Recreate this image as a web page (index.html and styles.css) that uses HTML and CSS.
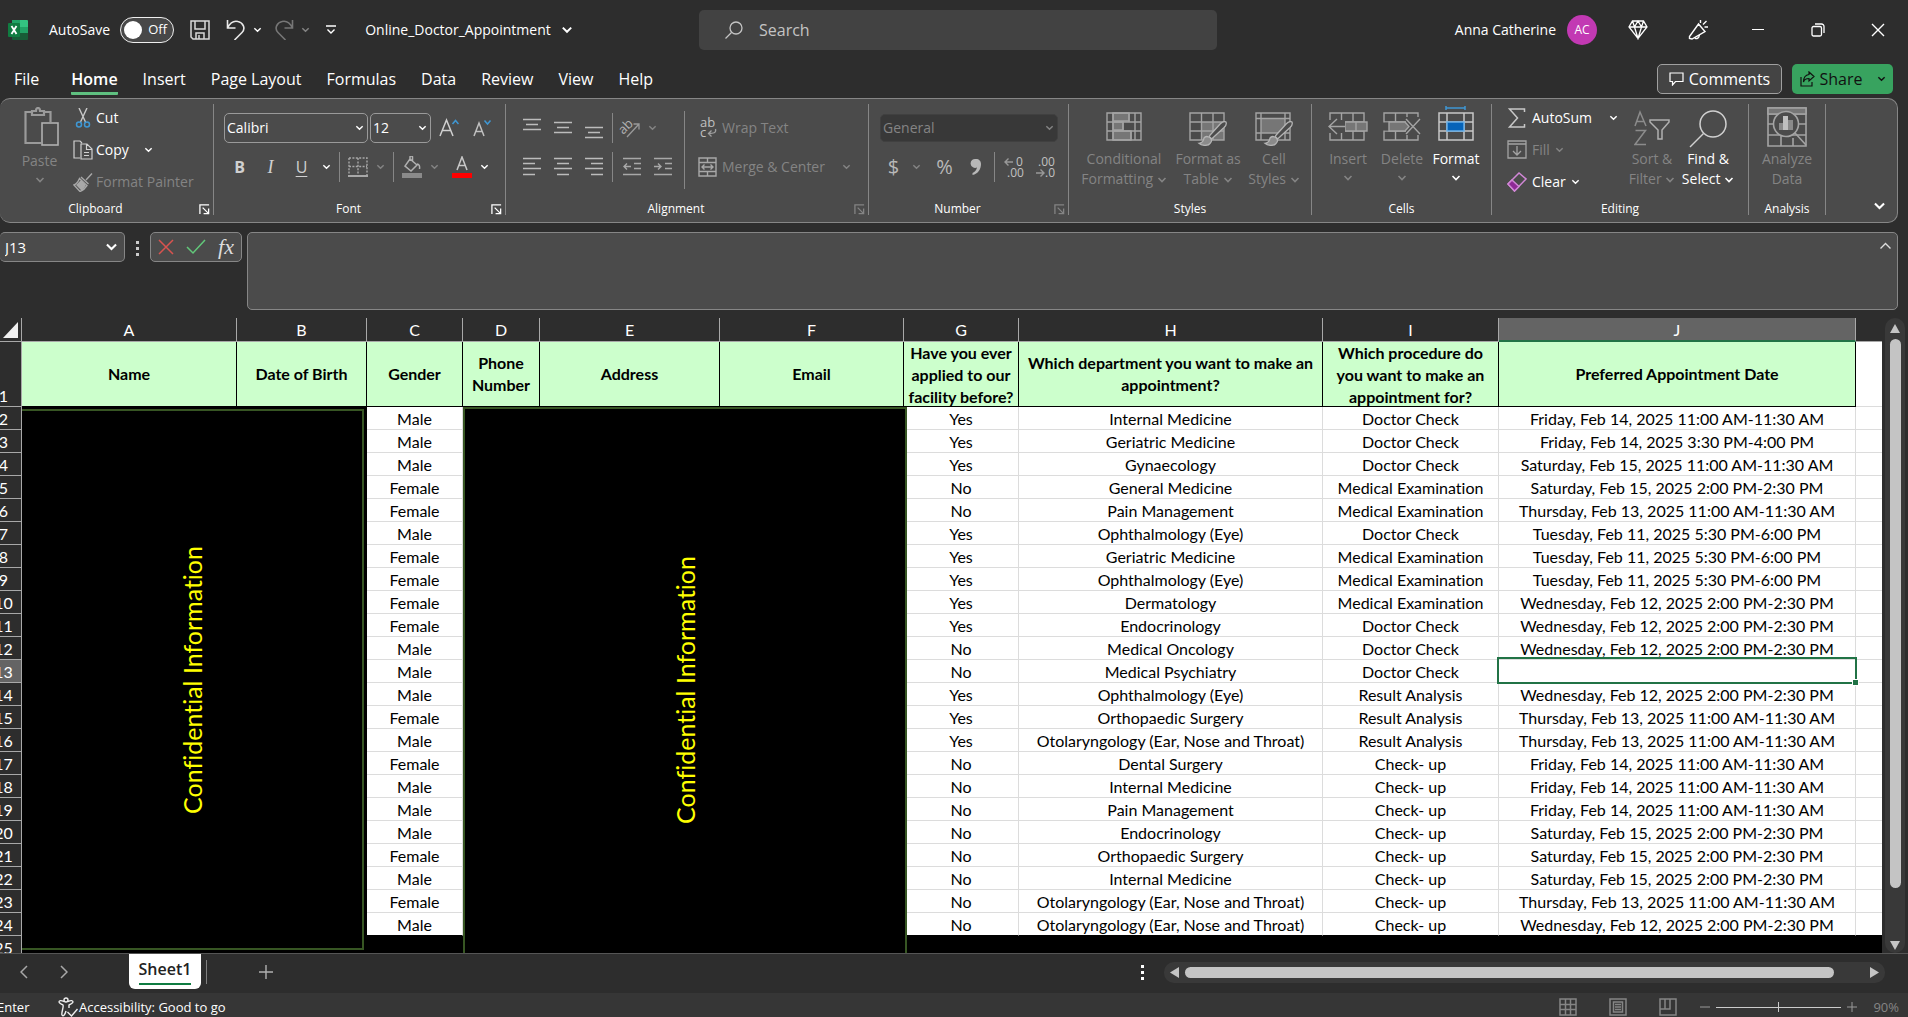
FILE: index.html
```html
<!DOCTYPE html>
<html lang="en">
<head>
<meta charset="utf-8">
<title>Online_Doctor_Appointment - Excel</title>
<link rel="stylesheet" href="styles.css">
</head>
<body>
<svg width="0" height="0" class="defs" aria-hidden="true">
  <defs>
    <symbol id="chev" viewBox="0 0 10 6"><path d="M1.5 1 5 4.5 8.5 1" fill="none" stroke="currentColor" stroke-width="1.6"/></symbol>
    <symbol id="launch" viewBox="0 0 12 12"><path d="M1 11V1h10M4 4l6 6M10.5 5v5.500H5" fill="none" stroke="currentColor" stroke-width="1.400"/></symbol>
    <symbol id="brush" viewBox="0 0 32 28"><path d="M31 1c-2-1-4 0-6 2L14 15c-1 1-1 2 0 3s2 1 3 0L29 7c2-2 3-4 2-6z" fill="#4b4b4b" stroke="#b4b4b4" stroke-width="1.400"/><path d="M12 17c-3-1-5 1-5 3-1 3-2 4-5 4 3 3 10 3 12 0 2-2 2-4 0-6z" fill="#8b8b8b" stroke="#b4b4b4" stroke-width="1.400"/></symbol>
  </defs>
</svg>

<header class="titlebar">
  <div class="title-left">
    <svg class="logo" width="20" height="20" viewBox="0 0 20 20"><path d="M4 0h8v7H4z" fill="#21a366"/><path d="M12 0h7a1 1 0 0 1 1 1v6h-8z" fill="#33c481"/><path d="M4 7h8v6H4z" fill="#107c41"/><path d="M12 7h8v6h-8z" fill="#21a366"/><path d="M4 13h16v6a1 1 0 0 1-1 1H5a1 1 0 0 1-1-1z" fill="#185c37"/><rect y="3" width="12" height="14" rx="1" fill="#107c41"/><path d="m3.500 6 5 8M8.500 6l-5 8" stroke="#fff" stroke-width="1.800"/></svg>
    <label class="autosave">AutoSave <span class="switch"><input type="checkbox" class="switch-box"><span class="switch-text">Off</span></span></label>
    <button class="plain save" aria-label="Save"><svg width="20" height="20" viewBox="0 0 20 20" fill="none" stroke="#d8d8d8" stroke-width="1.500"><path d="M1 1h18v18H3l-2-2zM5 1v8h10V1M6 19v-6h8v6M9 15v4"/></svg></button>
    <button class="plain undo" aria-label="Undo"><svg width="20" height="20" viewBox="0 0 20 20" fill="none" stroke="#e8e8e8" stroke-width="1.600"><path d="M1.500 0v8h8M1.500 8C4 3 8 .5 12 1.500c5 1 8 7 4 11L8.500 20"/></svg></button>
    <button class="plain chev-btn" aria-label="Undo list"><svg width="9" height="6"><use href="#chev"/></svg></button>
    <button class="plain redo" aria-label="Redo"><svg width="20" height="20" viewBox="0 0 20 20" fill="none" stroke="#767676" stroke-width="1.600"><path d="M18.500 0v8h-8M18.500 8C16 3 12 .5 8 1.500c-5 1-8 7-4 11L11.500 20"/></svg></button>
    <button class="plain chev-btn dim" aria-label="Redo list"><svg width="9" height="6"><use href="#chev"/></svg></button>
    <button class="plain qat" aria-label="Customize toolbar"><svg width="10" height="10" viewBox="0 0 10 10" fill="none" stroke="#fff" stroke-width="1.400"><path d="M0 1h10M1.500 4.500 5 8l3.500-3.500"/></svg></button>
    <button class="plain doc">Online_Doctor_Appointment <svg width="12" height="8"><use href="#chev"/></svg></button>
  </div>
  <label class="search"><svg width="18" height="18" viewBox="0 0 18 18" fill="none" stroke="#c4c4c4" stroke-width="1.300"><circle cx="11" cy="7" r="6"/><path d="M6.500 11.500.5 17.500"/></svg><input type="text" placeholder="Search" aria-label="Search"></label>
  <div class="title-right">
    <span class="user">Anna Catherine</span>
    <button class="avatar">AC</button>
    <button class="plain wbtn" aria-label="Premium"><svg width="20" height="20" viewBox="0 0 20 20" fill="none" stroke="#fff" stroke-width="1.300"><path d="M4.500 1h11L19 7l-9 11.500L1 7zM1 7h18M4.500 1 6.500 7 10 18.500 13.500 7l2-6M6.500 7 10 1l3.500 6"/></svg></button>
    <button class="plain wbtn" aria-label="Coming soon"><svg width="20" height="20" viewBox="0 0 20 20" fill="none" stroke="#fff" stroke-width="1.400"><path d="M10.500 4 1.500 16.500v2L4 19l13-7.500zM7 17.500c0 2 4 1.500 4.500-2.500M12.500 3V0M15 4.500 18.500 1M16.500 7H20"/></svg></button>
    <button class="plain wbtn" aria-label="Minimize"><svg width="12" height="12"><path d="M0 5.500h12" stroke="#fff"/></svg></button>
    <button class="plain wbtn" aria-label="Restore"><svg width="14" height="14" viewBox="0 0 14 14" fill="none" stroke="#fff" stroke-width="1.300"><rect x="1" y="3.500" width="9.500" height="9.500" rx="1.500"/><path d="M4 1h6.500A2.500 2.500 0 0 1 13 3.500V10"/></svg></button>
    <button class="plain wbtn" aria-label="Close"><svg width="14" height="14"><path d="m1 1 12 12M13 1 1 13" stroke="#fff" stroke-width="1.400"/></svg></button>
  </div>
</header>

<nav class="tabs">
  <a href="#">File</a><a href="#" class="active">Home</a><a href="#">Insert</a><a href="#">Page Layout</a><a href="#">Formulas</a><a href="#">Data</a><a href="#">Review</a><a href="#">View</a><a href="#">Help</a>
  <div class="tab-actions">
    <button class="comments"><svg width="15" height="14" viewBox="0 0 15 14" fill="none" stroke="#fff" stroke-width="1.200"><path d="M1 1h13v8.500H6.500L3.500 13V9.500H1z"/></svg>Comments</button>
    <button class="share"><svg width="15" height="16" viewBox="0 0 15 16" fill="none" stroke="#111" stroke-width="1.200"><path d="M1 6v9h11v-4M9 1l5 4.500L9 10V7.500C6 7.500 4 9 3.500 11 3.500 7 5.500 4 9 3.500z"/></svg>Share<svg class="share-chev" width="9" height="6"><use href="#chev"/></svg></button>
  </div>
</nav>

<section class="ribbon">
  <div class="group clipboard">
    <div class="body">
      <button class="plain big dim paste"><svg width="35" height="40" viewBox="0 0 35 40" fill="none" stroke="#9a9a9a" stroke-width="2.200"><path d="M7 5H1.500v31H17M21 5h5.500v10M8 8V4h4c0-4 4-4 4 0h4v4z"/><rect x="18" y="16" width="16" height="22" fill="#4b4b4b" stroke="#b0b0b0" stroke-width="1.600"/></svg><span>Paste</span><svg class="c" width="10" height="6"><use href="#chev"/></svg></button>
      <div class="stack">
        <button class="plain line"><svg width="20" height="20" viewBox="0 0 20 20" fill="none"><path d="m6 0 6.500 14M14 0 7.500 14" stroke="#c8c8c8" stroke-width="1.400"/><circle cx="6" cy="16.500" r="2.500" stroke="#3f97d3" stroke-width="1.500"/><circle cx="14" cy="16.500" r="2.500" stroke="#3f97d3" stroke-width="1.500"/></svg>Cut</button>
        <button class="plain line"><svg width="20" height="20" viewBox="0 0 20 20" fill="none" stroke="#d0d0d0" stroke-width="1.200"><path d="M7 18H1V1h6l2 2M8 4h6l5 5v10H8zM13.500 4v5.500H19M11 12.500h5M11 15.500h5"/></svg>Copy<svg class="gap-wide" width="9" height="6"><use href="#chev"/></svg></button>
        <button class="plain line dim"><svg width="20" height="20" viewBox="0 0 20 20" fill="none" stroke="#a8a8a8" stroke-width="1.400"><path d="M19 1.500 13 8M8 5l7.500 7M6.500 6.500l7.500 7c-2 3-4 5-7 6L1 13c3-1 4-3 5.500-6.500zM9.500 9l-4 4 3.500 3"/><path d="m4 13 5 5 3-5-4-4z" fill="#a8a8a8"/></svg>Format Painter</button>
      </div>
    </div>
    <div class="caption"><span>Clipboard</span><button class="plain" aria-label="Clipboard settings"><svg width="11" height="11"><use href="#launch"/></svg></button></div>
  </div>

  <div class="group font">
    <div class="body rows">
      <div class="row">
        <span class="combo w144"><select aria-label="Font"><option>Calibri</option></select><svg width="9" height="6"><use href="#chev"/></svg></span>
        <span class="combo w61"><select aria-label="Font size"><option>12</option></select><svg width="9" height="6"><use href="#chev"/></svg></span>
        <button class="plain t31" aria-label="Increase font size"><svg width="20" height="20" viewBox="0 0 20 20" fill="none"><path d="M1 18 7.500 2 14 18M3.500 12.500h8" stroke="#d0d0d0" stroke-width="1.500"/><path d="m13.500 6 3-3.500 3 3.500" stroke="#3f97d3" stroke-width="1.500"/></svg></button>
        <button class="plain t31" aria-label="Decrease font size"><svg width="20" height="20" viewBox="0 0 20 20" fill="none"><path d="m2 18 5-13 5 13M4 13.500h6" stroke="#c0c0c0" stroke-width="1.500"/><path d="m12.500 2.500 3 3.500 3-3.500" stroke="#3f97d3" stroke-width="1.500"/></svg></button>
      </div>
      <div class="row tight">
        <button class="plain t31 b">B</button><button class="plain t31 i">I</button><button class="plain t31 u">U</button><button class="plain t18" aria-label="Underline styles"><svg width="9" height="6"><use href="#chev"/></svg></button><i class="sep"></i>
        <button class="plain t27" aria-label="Borders"><svg width="20" height="20" viewBox="0 0 20 20" fill="none" stroke="#a8a8a8" stroke-width="1.400"><path d="M1 1h18v17M1 1v17M10 1v17M1 9.500h18" stroke-dasharray="2 1.400"/><path d="M0 19h20" stroke-width="2"/></svg></button><button class="plain t18 dim" aria-label="Border styles"><svg width="9" height="6"><use href="#chev"/></svg></button><i class="sep"></i>
        <button class="plain t27" aria-label="Fill color"><svg width="20" height="22" viewBox="0 0 20 22"><path d="m8 3 7 6-6 6-6-5 5-7V1c0-1.500 2.500-1.500 2.500 0v5M15 8c2 0 3 2 2.500 5" fill="none" stroke="#b0b0b0" stroke-width="1.500"/><path d="M0 17h20v5H0z" fill="#8a8a8a"/></svg></button><button class="plain t18 dim" aria-label="Fill colors"><svg width="9" height="6"><use href="#chev"/></svg></button>
        <button class="plain t27 fc" aria-label="Font color"><svg width="20" height="22" viewBox="0 0 20 22"><path d="m5 14 5-13 5 13M7 9.500h6" fill="none" stroke="#c8c8c8" stroke-width="1.500"/><path d="M0 17h20v5H0z" fill="#f00"/></svg></button><button class="plain t18" aria-label="Font colors"><svg width="9" height="6"><use href="#chev"/></svg></button>
      </div>
    </div>
    <div class="caption"><span>Font</span><button class="plain" aria-label="Font settings"><svg width="11" height="11"><use href="#launch"/></svg></button></div>
  </div>

  <div class="group align">
    <div class="body">
      <div class="rows">
        <div class="row tight">
          <button class="plain t31" aria-label="Top align"><svg width="18" height="22" viewBox="0 0 18 22" stroke="#bcbcbc" stroke-width="1.500"><path d="M0 2.500h18M3 7.500h12M0 12.500h18"/></svg></button>
          <button class="plain t31" aria-label="Middle align"><svg width="18" height="22" viewBox="0 0 18 22" stroke="#bcbcbc" stroke-width="1.500"><path d="M0 5.500h18M3 10.500h12M0 15.500h18"/></svg></button>
          <button class="plain t31" aria-label="Bottom align"><svg width="18" height="22" viewBox="0 0 18 22" stroke="#bcbcbc" stroke-width="1.500"><path d="M0 10.500h18M3 15.500h12M0 20.500h18"/></svg></button><i class="sep s7"></i>
          <button class="plain t27" aria-label="Orientation"><svg class="open" width="22" height="22" viewBox="0 0 22 22"><text x="0" y="14" transform="rotate(-45 7 11)" font-size="13" fill="#b0b0b0">ab</text><path d="M8 20 20 7M14.500 7H20v5.500" fill="none" stroke="#999" stroke-width="1.300"/></svg></button><button class="plain t18 dim" aria-label="Orientations"><svg width="9" height="6"><use href="#chev"/></svg></button>
        </div>
        <div class="row tight">
          <button class="plain t31" aria-label="Align left"><svg width="18" height="20" stroke="#bcbcbc" stroke-width="1.500"><path d="M0 1.500h18M0 6.500h12M0 11.500h18M0 17.500h12"/></svg></button>
          <button class="plain t31" aria-label="Center"><svg width="18" height="20" stroke="#bcbcbc" stroke-width="1.500"><path d="M0 1.500h18M3 6.500h12M0 11.500h18M3 17.500h12"/></svg></button>
          <button class="plain t31" aria-label="Align right"><svg width="18" height="20" stroke="#bcbcbc" stroke-width="1.500"><path d="M0 1.500h18M6 6.500h12M0 11.500h18M6 17.500h12"/></svg></button><i class="sep s7"></i>
          <button class="plain t31" aria-label="Decrease indent"><svg width="18" height="20" stroke="#a8a8a8" stroke-width="1.400" fill="none"><path d="M0 1.500h18M11 6.500h7M11 11.500h7M0 17.500h18M8 9.500H1M4 6.500l-3 3 3 3"/></svg></button>
          <button class="plain t31" aria-label="Increase indent"><svg width="18" height="20" stroke="#a8a8a8" stroke-width="1.400" fill="none"><path d="M0 1.500h18M11 6.500h7M11 11.500h7M0 17.500h18M0 9.500h7M4 6.500l3 3-3 3"/></svg></button>
        </div>
      </div>
      <i class="sep tall"></i>
      <div class="rows">
        <div class="row tight"><button class="plain line dim"><span class="t27"><svg class="open" width="18" height="22" viewBox="0 0 18 22"><text x="1" y="10" font-size="13" fill="#c0c0c0">ab</text><text x="1" y="20" font-size="13" fill="#c0c0c0">c</text><path d="M16.500 12c1 4-2 4.500-7 4.500M12.500 13.500l-3 3 3 3" fill="none" stroke="#a0a0a0" stroke-width="1.300"/></svg></span>Wrap Text</button></div>
        <div class="row tight"><button class="plain line dim"><span class="t27"><svg width="19" height="20" viewBox="0 0 19 20" fill="none" stroke="#a8a8a8" stroke-width="1.400"><path d="M1 1h17v18H1zM1 5.500h17M1 14.500h17M9.500 1v4M9.500 15v4M4 10h11M6.500 7.500 4 10l2.500 2.500M12.500 7.500 15 10l-2.500 2.500"/></svg></span>Merge &amp; Center<svg class="gap-merge" width="9" height="6"><use href="#chev"/></svg></button></div>
      </div>
    </div>
    <div class="caption"><span>Alignment</span><button class="plain dim" aria-label="Alignment settings"><svg width="11" height="11"><use href="#launch"/></svg></button></div>
  </div>

  <div class="group number">
    <div class="body rows">
      <div class="row"><span class="combo dark"><select aria-label="Number format" disabled><option>General</option></select><svg width="9" height="6"><use href="#chev"/></svg></span></div>
      <div class="row tight">
        <button class="plain t27 sym">$</button><button class="plain t18 dim" aria-label="Currencies"><svg width="9" height="6"><use href="#chev"/></svg></button><button class="plain t31 sym pct">%</button><button class="plain t31" aria-label="Comma style"><svg width="12" height="18" viewBox="0 0 12 18"><path d="M6 1a4.500 4.500 0 1 0 1 8.500C6.500 12 5 14 2.500 15v2C8 16 11 11 11 6c0-3-2-5-5-5z" fill="#b8b8b8"/></svg></button><i class="sep s7"></i>
        <button class="plain t31" aria-label="Increase decimal"><svg class="open" width="20" height="22" viewBox="0 0 20 22"><path d="M9 6H1M4.500 2.500 1 6l3.500 3.500" fill="none" stroke="#999" stroke-width="1.400"/><text x="12" y="10" font-size="12" fill="#c0c0c0">0</text><text x="3" y="21" font-size="12" fill="#c0c0c0">.00</text></svg></button>
        <button class="plain t31" aria-label="Decrease decimal"><svg class="open" width="20" height="22" viewBox="0 0 20 22"><path d="M1 17h8M5.500 13.500 9 17l-3.500 3.500" fill="none" stroke="#999" stroke-width="1.400"/><text x="3" y="10" font-size="12" fill="#c0c0c0">.00</text><text x="10" y="21" font-size="12" fill="#c0c0c0">.0</text></svg></button>
      </div>
    </div>
    <div class="caption"><span>Number</span><button class="plain dim" aria-label="Number settings"><svg width="11" height="11"><use href="#launch"/></svg></button></div>
  </div>

  <div class="group styles">
    <div class="body">
      <button class="plain big dim two w94"><svg width="36" height="34" viewBox="0 0 36 34" fill="none" stroke="#a4a4a4" stroke-width="1.400"><path d="M7 1h16v8H7zM7 10h10v8H7zM7 19h18v9H7z" fill="#767676"/><path d="M1 1h34v27H1zM1 10h34M1 19h34M7 1v27M29 1v27M23 1v9M17 10v9M25 19v9"/></svg><span>Conditional<br>Formatting <svg width="10" height="6"><use href="#chev"/></svg></span></button>
      <button class="plain big dim two w74"><svg width="38" height="34" viewBox="0 0 38 34" fill="none" stroke="#a4a4a4" stroke-width="1.400"><path d="M13 10h22v18H13z" fill="#767676" stroke="none"/><path d="M1 1h34v27H1zM1 10h34M1 19h34M12.500 1v27M24 1v27"/><use href="#brush" x="8" y="9" width="30" height="26"/></svg><span>Format as<br>Table <svg width="10" height="6"><use href="#chev"/></svg></span></button>
      <button class="plain big dim two w58"><svg width="38" height="34" viewBox="0 0 38 34" fill="none" stroke="#a4a4a4" stroke-width="1.400"><path d="M6 7h24v14H6z" fill="#767676" stroke="none"/><path d="M1 1h34v27H1zM1 6.500h34M1 21h34M6 1v27M30 1v27"/><use href="#brush" x="8" y="9" width="30" height="26"/></svg><span>Cell<br>Styles <svg width="10" height="6"><use href="#chev"/></svg></span></button>
    </div>
    <div class="caption"><span>Styles</span></div>
  </div>

  <div class="group cells">
    <div class="body">
      <button class="plain big dim two w54"><svg width="40" height="34" viewBox="0 0 40 34" fill="none" stroke="#a4a4a4" stroke-width="1.400"><path d="M2 1h34v27H2zM2 10h34M2 19h34M13.500 1v27M25 1v27"/><path d="M17 10h22v9H17z" fill="#767676"/><path d="M0 8h17v13H0z" fill="#4b4b4b" stroke="none"/><path d="M17 14.500H1M9 7l-8 7.500L9 22"/><path d="M28 10v9"/></svg><span>Insert</span><svg class="c" width="10" height="6"><use href="#chev"/></svg></button>
      <button class="plain big dim two w54"><svg width="38" height="34" viewBox="0 0 38 34" fill="none" stroke="#a4a4a4" stroke-width="1.400"><path d="M1 1h34v27H1zM1 10h34M1 19h34M12.500 1v27M24 1v27"/><path d="M0 10.500h6v8H0zM23 5h15v18H23z" fill="#4b4b4b" stroke="none"/><path d="M6 10h16l4 4.500-4 4.500H6z" fill="#767676"/><path d="m23 7 14 15M37 7 23 22"/></svg><span>Delete</span><svg class="c" width="10" height="6"><use href="#chev"/></svg></button>
      <button class="plain big two w54"><svg class="open" width="36" height="34" viewBox="0 0 36 34" fill="none" stroke="#c8c8c8" stroke-width="1.500"><path d="M1 1h34v27H1zM1 10h34M1 19h34M9 1v27M26 1v27"/><path d="M9 10h17v9H9z" fill="#0563b8" stroke="#69afe5"/><path d="M8-4h19M8-6v4M27-6v4" stroke="#3f97d3"/></svg><span>Format</span><svg class="c" width="10" height="6"><use href="#chev"/></svg></button>
    </div>
    <div class="caption"><span>Cells</span></div>
  </div>

  <div class="group editing">
    <div class="body">
      <div class="stack">
        <button class="plain line"><svg width="20" height="20" viewBox="0 0 20 20" fill="none" stroke="#c8c8c8" stroke-width="1.500"><path d="M17.500 4V1h-15l8 9-8 9h15v-3"/></svg>AutoSum<svg class="gap-wide" width="9" height="6"><use href="#chev"/></svg></button>
        <button class="plain line dim"><svg width="20" height="20" viewBox="0 0 20 20" fill="none" stroke="#a4a4a4" stroke-width="1.300"><path d="M1 1h18v17H1zM1 4h18M10 6v9M6 11l4 4 4-4"/></svg>Fill<svg width="9" height="6"><use href="#chev"/></svg></button>
        <button class="plain line"><svg width="20" height="20" viewBox="0 0 20 20" fill="none" stroke="#d187d6" stroke-width="1.500"><path d="m1 12 11-11 7 6L7.500 19z"/><path d="m1 12 4-4 7 6.500L7.500 19z" fill="#8f2a96"/></svg>Clear<svg width="9" height="6"><use href="#chev"/></svg></button>
      </div>
      <button class="plain big dim two w54"><svg width="36" height="36" viewBox="0 0 36 36" fill="none" stroke="#8c8c8c" stroke-width="1.500"><path d="m1 15 5-14 6 14M3 10.500h7M1.500 19.500h10L1 33.500h11"/><path d="M16 9h19v2l-7 8v9h-4v-9l-8-8z" stroke="#b0b0b0"/></svg><span>Sort &amp;<br>Filter <svg width="10" height="6"><use href="#chev"/></svg></span></button>
      <button class="plain big two w58"><svg width="38" height="38" viewBox="0 0 38 38" fill="none" stroke="#d0d0d0" stroke-width="1.500"><circle cx="24" cy="14" r="13"/><path d="M14.500 23.500 1 37"/></svg><span>Find &amp;<br>Select <svg width="10" height="6"><use href="#chev"/></svg></span></button>
    </div>
    <div class="caption"><span>Editing</span></div>
  </div>

  <div class="group analysis">
    <div class="body">
      <button class="plain big dim two analyze"><svg width="40" height="40" viewBox="0 0 40 40" fill="none" stroke="#a4a4a4" stroke-width="1.600"><path d="M1 1h38v38H1zM1 7h38M1 17h6M1 28h38M14 28v11M26 31v8M32 17h7"/><path d="M1 1h38v6H1z" fill="#767676"/><circle cx="19" cy="17" r="12.500" fill="#4b4b4b"/><path d="m28 26 11 12"/><path d="M12 16h4v7h-4zM21 13h5v10h-5z" fill="#8a8a8a" stroke="none"/><path d="M16 9h5v14h-5z" fill="#c0c0c0" stroke="none"/></svg><span>Analyze<br>Data</span></button>
    </div>
    <div class="caption"><span>Analysis</span></div>
  </div>
  <button class="plain collapse" aria-label="Ribbon options"><svg width="13" height="8"><use href="#chev"/></svg></button>
</section>

<section class="formula-row">
  <span class="namebox"><input type="text" value="J13" aria-label="Name box"><svg width="13" height="8"><use href="#chev"/></svg></span>
  <span class="dots"><i></i><i></i><i></i></span>
  <span class="fx">
    <button class="plain" aria-label="Cancel"><svg width="16" height="16"><path d="m1 1 14 14M15 1 1 15" stroke="#d9534f" stroke-width="1.500"/></svg></button>
    <button class="plain" aria-label="Enter"><svg width="20" height="16"><path d="m1 8 6 6L19 1" fill="none" stroke="#62c87a" stroke-width="1.500"/></svg></button>
    <button class="plain fxb">fx</button>
  </span>
  <label class="formula"><textarea aria-label="Formula bar"></textarea><svg width="13" height="8" viewBox="0 0 13 8"><path d="m1.500 6.500 5-5 5 5" fill="none" stroke="#ddd" stroke-width="1.400"/></svg></label>
</section>

<main class="sheet">
  <div class="grid">
    <table>
      <colgroup><col class="rh"><col class="ca"><col class="cb"><col class="cc"><col class="cd"><col class="ce"><col class="cf"><col class="cg"><col class="ch"><col class="ci"><col class="cj"><col></colgroup>
      <thead>
        <tr class="letters"><th class="corner"><svg width="17" height="18"><path d="M16 1v16H1z" fill="#f0f0f0"/></svg></th><th>A</th><th>B</th><th>C</th><th>D</th><th>E</th><th>F</th><th>G</th><th>H</th><th>I</th><th class="sel">J</th><th class="k"></th></tr>
      </thead>
      <tbody>
        <tr class="heads"><th>1</th><td><div>Name</div></td><td><div>Date of Birth</div></td><td><div>Gender</div></td><td><div>Phone<br>Number</div></td><td><div>Address</div></td><td><div>Email</div></td><td><div>Have you ever<br>applied to our<br>facility before?</div></td><td><div>Which department you want to make an<br>appointment?</div></td><td><div>Which procedure do<br>you want to make an<br>appointment for?</div></td><td><div>Preferred Appointment Date</div></td><td class="k"></td></tr>
        <tr><th>2</th><td class="x" colspan="2"></td><td>Male</td><td class="x" colspan="3"></td><td>Yes</td><td>Internal Medicine</td><td>Doctor Check</td><td>Friday, Feb 14, 2025 11:00 AM-11:30 AM</td><td></td></tr>
        <tr><th>3</th><td class="x" colspan="2"></td><td>Male</td><td class="x" colspan="3"></td><td>Yes</td><td>Geriatric Medicine</td><td>Doctor Check</td><td>Friday, Feb 14, 2025 3:30 PM-4:00 PM</td><td></td></tr>
        <tr><th>4</th><td class="x" colspan="2"></td><td>Male</td><td class="x" colspan="3"></td><td>Yes</td><td>Gynaecology</td><td>Doctor Check</td><td>Saturday, Feb 15, 2025 11:00 AM-11:30 AM</td><td></td></tr>
        <tr><th>5</th><td class="x" colspan="2"></td><td>Female</td><td class="x" colspan="3"></td><td>No</td><td>General Medicine</td><td>Medical Examination</td><td>Saturday, Feb 15, 2025 2:00 PM-2:30 PM</td><td></td></tr>
        <tr><th>6</th><td class="x" colspan="2"></td><td>Female</td><td class="x" colspan="3"></td><td>No</td><td>Pain Management</td><td>Medical Examination</td><td>Thursday, Feb 13, 2025 11:00 AM-11:30 AM</td><td></td></tr>
        <tr><th>7</th><td class="x" colspan="2"></td><td>Male</td><td class="x" colspan="3"></td><td>Yes</td><td>Ophthalmology (Eye)</td><td>Doctor Check</td><td>Tuesday, Feb 11, 2025 5:30 PM-6:00 PM</td><td></td></tr>
        <tr><th>8</th><td class="x" colspan="2"></td><td>Female</td><td class="x" colspan="3"></td><td>Yes</td><td>Geriatric Medicine</td><td>Medical Examination</td><td>Tuesday, Feb 11, 2025 5:30 PM-6:00 PM</td><td></td></tr>
        <tr><th>9</th><td class="x" colspan="2"></td><td>Female</td><td class="x" colspan="3"></td><td>Yes</td><td>Ophthalmology (Eye)</td><td>Medical Examination</td><td>Tuesday, Feb 11, 2025 5:30 PM-6:00 PM</td><td></td></tr>
        <tr><th>10</th><td class="x" colspan="2"></td><td>Female</td><td class="x" colspan="3"></td><td>Yes</td><td>Dermatology</td><td>Medical Examination</td><td>Wednesday, Feb 12, 2025 2:00 PM-2:30 PM</td><td></td></tr>
        <tr><th>11</th><td class="x" colspan="2"></td><td>Female</td><td class="x" colspan="3"></td><td>Yes</td><td>Endocrinology</td><td>Doctor Check</td><td>Wednesday, Feb 12, 2025 2:00 PM-2:30 PM</td><td></td></tr>
        <tr><th>12</th><td class="x" colspan="2"></td><td>Male</td><td class="x" colspan="3"></td><td>No</td><td>Medical Oncology</td><td>Doctor Check</td><td>Wednesday, Feb 12, 2025 2:00 PM-2:30 PM</td><td></td></tr>
        <tr><th class="sel">13</th><td class="x" colspan="2"></td><td>Male</td><td class="x" colspan="3"></td><td>No</td><td>Medical Psychiatry</td><td>Doctor Check</td><td class="current"></td><td></td></tr>
        <tr><th>14</th><td class="x" colspan="2"></td><td>Male</td><td class="x" colspan="3"></td><td>Yes</td><td>Ophthalmology (Eye)</td><td>Result Analysis</td><td>Wednesday, Feb 12, 2025 2:00 PM-2:30 PM</td><td></td></tr>
        <tr><th>15</th><td class="x" colspan="2"></td><td>Female</td><td class="x" colspan="3"></td><td>Yes</td><td>Orthopaedic Surgery</td><td>Result Analysis</td><td>Thursday, Feb 13, 2025 11:00 AM-11:30 AM</td><td></td></tr>
        <tr><th>16</th><td class="x" colspan="2"></td><td>Male</td><td class="x" colspan="3"></td><td>Yes</td><td>Otolaryngology (Ear, Nose and Throat)</td><td>Result Analysis</td><td>Thursday, Feb 13, 2025 11:00 AM-11:30 AM</td><td></td></tr>
        <tr><th>17</th><td class="x" colspan="2"></td><td>Female</td><td class="x" colspan="3"></td><td>No</td><td>Dental Surgery</td><td>Check- up</td><td>Friday, Feb 14, 2025 11:00 AM-11:30 AM</td><td></td></tr>
        <tr><th>18</th><td class="x" colspan="2"></td><td>Male</td><td class="x" colspan="3"></td><td>No</td><td>Internal Medicine</td><td>Check- up</td><td>Friday, Feb 14, 2025 11:00 AM-11:30 AM</td><td></td></tr>
        <tr><th>19</th><td class="x" colspan="2"></td><td>Male</td><td class="x" colspan="3"></td><td>No</td><td>Pain Management</td><td>Check- up</td><td>Friday, Feb 14, 2025 11:00 AM-11:30 AM</td><td></td></tr>
        <tr><th>20</th><td class="x" colspan="2"></td><td>Male</td><td class="x" colspan="3"></td><td>No</td><td>Endocrinology</td><td>Check- up</td><td>Saturday, Feb 15, 2025 2:00 PM-2:30 PM</td><td></td></tr>
        <tr><th>21</th><td class="x" colspan="2"></td><td>Female</td><td class="x" colspan="3"></td><td>No</td><td>Orthopaedic Surgery</td><td>Check- up</td><td>Saturday, Feb 15, 2025 2:00 PM-2:30 PM</td><td></td></tr>
        <tr><th>22</th><td class="x" colspan="2"></td><td>Male</td><td class="x" colspan="3"></td><td>No</td><td>Internal Medicine</td><td>Check- up</td><td>Saturday, Feb 15, 2025 2:00 PM-2:30 PM</td><td></td></tr>
        <tr><th>23</th><td class="x" colspan="2"></td><td>Female</td><td class="x" colspan="3"></td><td>No</td><td>Otolaryngology (Ear, Nose and Throat)</td><td>Check- up</td><td>Thursday, Feb 13, 2025 11:00 AM-11:30 AM</td><td></td></tr>
        <tr class="last"><th>24</th><td class="x" colspan="2"></td><td>Male</td><td class="x" colspan="3"></td><td>No</td><td>Otolaryngology (Ear, Nose and Throat)</td><td>Check- up</td><td>Wednesday, Feb 12, 2025 2:00 PM-2:30 PM</td><td></td></tr>
        <tr><th>25</th><td class="x" colspan="11"></td></tr>
      </tbody>
    </table>
    <div class="cover cover-a"><span>Confidential Information</span></div>
    <div class="cover cover-b"><span>Confidential Information</span></div>
  </div>
  <div class="vscroll"><svg width="10" height="9"><path d="m5 0 5 9H0z" fill="#c4c4c4"/></svg><i></i><svg width="10" height="9"><path d="M0 0h10L5 9z" fill="#c4c4c4"/></svg></div>
</main>

<footer>
  <div class="sheetbar">
    <button class="plain nav" aria-label="Previous sheet"><svg width="8" height="14"><path d="M7 1 1 7l6 6" fill="none" stroke="#a8a8a8" stroke-width="1.500"/></svg></button>
    <button class="plain nav" aria-label="Next sheet"><svg width="8" height="14"><path d="m1 1 6 6-6 6" fill="none" stroke="#a8a8a8" stroke-width="1.500"/></svg></button>
    <button class="sheet-tab"><span>Sheet1</span></button>
    <i class="tabsep"></i>
    <button class="plain add" aria-label="New sheet"><svg width="14" height="14"><path d="M0 7h14M7 0v14" stroke="#b0b0b0" stroke-width="1.400"/></svg></button>
    <span class="dots white"><i></i><i></i><i></i></span>
    <div class="hscroll"><svg width="9" height="11"><path d="M9 0v11L0 5.500z" fill="#c4c4c4"/></svg><i></i><svg width="9" height="11"><path d="M0 0v11l9-5.500z" fill="#c4c4c4"/></svg></div>
  </div>
  <div class="status">
    <span class="mode">Enter</span>
    <button class="plain acc"><svg width="20" height="20" viewBox="0 0 20 20" fill="none" stroke="#eee" stroke-width="1.400"><circle cx="8" cy="3" r="2"/><path d="M6 4.500C3 3 1 3.500 1 5s3 2 4 3c1 2-2 8-1 10s3 0 4-4M10 4.500c3-1.500 5-1 5 .5s-3 2-4 3v3M9.500 15l4 4 6-7"/></svg>Accessibility: Good to go</button>
    <div class="views">
      <button class="plain" aria-label="Normal"><svg width="18" height="18" viewBox="0 0 18 18" fill="none" stroke="#858585" stroke-width="1.500"><path d="M1 1h16v16H1zM6.500 1v16M11.500 1v16M1 6.500h16M1 11.500h16"/></svg></button>
      <button class="plain" aria-label="Page layout"><svg width="18" height="18" viewBox="0 0 18 18" fill="none" stroke="#858585" stroke-width="1.500"><path d="M1 1h16v16H1zM4.500 4h9v10h-9zM6 6.500h6M6 9h6M6 11.500h6"/></svg></button>
      <button class="plain" aria-label="Page break preview"><svg width="18" height="18" viewBox="0 0 18 18" fill="none" stroke="#858585" stroke-width="1.500"><path d="M1 1h16v16H1zM1 11h10V1M6 1v10"/></svg></button>
    </div>
    <button class="plain" aria-label="Zoom out"><svg width="10" height="10"><path d="M0 5h10" stroke="#999"/></svg></button>
    <input type="range" class="zoom" aria-label="Zoom">
    <button class="plain" aria-label="Zoom in"><svg width="10" height="10"><path d="M0 5h10M5 0v10" stroke="#999"/></svg></button>
    <span class="zoom-level">90%</span>
  </div>
</footer>
</body>
</html>
```

FILE: styles.css
```css
* { box-sizing: border-box; }
body {
  margin: 0;
  height: 100vh;
  display: flex;
  flex-direction: column;
  overflow: hidden;
  background: #2d2d2d;
  color: #fff;
  font: 14px/20px "Open Sans", "Noto Sans", sans-serif;
}
.defs { position: absolute; }
svg { display: block; flex: none; }
.open { overflow: visible; }
button, input, select, textarea { font: inherit; color: inherit; }
button { cursor: default; white-space: nowrap; }
.plain {
  background: none;
  border: 0;
  padding: 0;
  display: flex;
  align-items: center;
  justify-content: center;
}
.plain.dim { color: #848484; }

/* Title bar */
.titlebar {
  height: 60px;
  display: grid;
  grid-template-columns: 699fr 518fr 691fr;
  align-items: center;
}
.title-left { display: flex; align-items: center; padding-left: 8px; }
.autosave { display: flex; align-items: center; gap: 10px; margin-left: 21px; }
.switch { position: relative; display: flex; width: 54px; height: 26px; }
.switch-box {
  appearance: none;
  margin: 0;
  width: 54px;
  height: 26px;
  border: 1px solid #eee;
  border-radius: 13px;
  background: #484848;
}
.switch-box::before {
  content: "";
  display: block;
  width: 18px;
  height: 18px;
  margin: 3px;
  border-radius: 50%;
  background: #fff;
}
.switch-text { position: absolute; left: 28px; top: 2px; font-size: 13px; }
.save { margin-left: 16px; }
.undo { margin-left: 16px; }
.chev-btn { width: 22px; }
.redo { margin-left: 6px; }
.qat { margin-left: 10px; }
.doc { margin-left: 29px; gap: 10px; }
.search {
  display: flex;
  align-items: center;
  gap: 16px;
  height: 40px;
  padding-left: 26px;
  background: #424242;
  border-radius: 5px;
}
.search input {
  flex: 1;
  min-width: 0;
  background: none;
  border: 0;
  outline: 0;
  padding: 0;
  font-size: 16px;
}
.search input::placeholder { color: #c4c4c4; opacity: 1; }
.title-right { display: flex; align-items: center; justify-content: flex-end; }
.avatar {
  width: 30px;
  height: 30px;
  margin: 0 11px;
  padding: 0;
  border: 0;
  border-radius: 50%;
  background: #c239b3;
  font-size: 12px;
}
.wbtn { width: 60px; }

/* Ribbon tabs */
.tabs {
  height: 38px;
  display: flex;
  gap: 25px;
  padding: 4px 15px 0 14px;
  font-size: 16px;
}
.tabs a {
  color: #fff;
  text-decoration: none;
  height: 31px;
  line-height: 30px;
  white-space: nowrap;
}
.tabs .active {
  margin-left: 7px;
  font-weight: 600;
  border-bottom: 3px solid #5fc080;
  border-radius: 1px;
}
.tab-actions { display: flex; gap: 10px; margin-left: auto; }
.comments, .share {
  display: flex;
  align-items: center;
  justify-content: center;
  height: 30px;
  border-radius: 5px;
  padding: 0;
  gap: 5px;
}
.comments { width: 125px; background: #444; border: 1px solid #a0a0a0; }
.share { width: 101px; background: #38a35f; border: 0; color: #111; }
.share-chev { margin-left: 9px; }

/* Ribbon */
.ribbon {
  height: 125px;
  display: flex;
  margin-right: 10px;
  background: #4b4b4b;
  border: 1px solid #868686;
  border-left: 0;
  border-radius: 10px;
}
.group {
  display: flex;
  flex-direction: column;
  margin: 5px 0 7px;
  border-right: 1px solid #868686;
}
.clipboard { width: 214px; }
.font { width: 292px; }
.align { width: 363px; }
.number { width: 200px; }
.styles { width: 243px; }
.cells { width: 180px; }
.editing { width: 257px; }
.analysis { width: 77px; }
.body { flex: 1; display: flex; }
.caption {
  height: 12px;
  display: flex;
  align-items: center;
  font-size: 12px;
  line-height: 12px;
}
.caption span { flex: 1; text-align: center; }
.caption button { margin: 0 3px 0 8px; width: 11px; }
.rows { display: flex; flex-direction: column; gap: 7px; padding-top: 8px; }
.row { display: flex; align-items: center; height: 32px; gap: 2px; }
.row.tight { gap: 0; }
.font .body { padding-left: 10px; }
.align .body > .rows:first-child { padding-left: 10px; }
.number .body { padding-left: 11px; }
.stack { display: flex; flex-direction: column; margin-top: -2px; }
.stack .line { height: 32px; }
.line { gap: 5px; justify-content: flex-start; }
.clipboard .line { gap: 3px; }
.row .line { gap: 1px; }
.gap-wide { margin-left: 12px; }
.gap-merge { margin-left: 16px; }
.t31 { width: 31px; height: 32px; }
.t27 { width: 27px; display: flex; justify-content: center; align-items: center; }
.t18 { width: 18px; height: 32px; }
.sep { width: 1px; height: 30px; margin: 0 4px; background: #868686; }
.sep.s7 { margin: 0 3px; }
.sep.tall { height: 78px; margin: 7px 9px 0 6px; }
.fc { margin-left: 5px; }
.b, .i, .u { color: #d0d0d0; font-size: 16px; }
.b { font-weight: 700; }
.i { font-family: "Liberation Serif", serif; font-style: italic; font-size: 18px; }
.u { text-decoration: underline; text-underline-offset: 3px; }
.sym { color: #b8b8b8; font-size: 20px; }
.pct { margin-left: 4px; }
.combo {
  display: flex;
  align-items: center;
  height: 30px;
  padding-right: 3px;
  border: 1px solid #9a9a9a;
  border-radius: 5px;
}
.combo select {
  appearance: none;
  flex: 1;
  min-width: 0;
  padding: 0 0 0 2px;
  background: none;
  border: 0;
  opacity: 1;
}
.w144 { width: 144px; }
.w61 { width: 61px; }
.combo.dark { width: 178px; height: 28px; background: #383838; border-color: #404040; color: #848484; }

.big {
  flex-direction: column;
  justify-content: flex-start;
  line-height: 20px;
}
.big span { text-align: center; }
.big span svg { display: inline-block; vertical-align: middle; }
.big .c { margin-top: 6px; }
.big.two > svg:first-child { margin: 8px 0 3px; height: 34px; }
.paste { width: 55px; margin: 3px 6px 0 12px; }
.paste > svg:first-child { margin: 0 0 4px 3px; }
.styles .body { padding-left: 8px; }
.w94 { width: 94px; }
.w74 { width: 74px; }
.w58 { width: 58px; }
.w54 { width: 54px; }
.cells .body { padding-left: 9px; }
.editing .body { padding-left: 15px; }
.editing .stack { width: 118px; }
.editing .big.two > svg:first-child { margin: 5px 0 0; height: 40px; }
.analyze { flex: 1; }
.analyze.big.two > svg:first-child { margin: 3px 0 2px; height: 40px; }
.collapse { margin: 103px 11px 0 auto; align-self: flex-start; }

/* Formula bar */
.formula-row { display: flex; align-items: flex-start; padding: 9px 10px 8px 0; }
.namebox {
  display: flex;
  align-items: center;
  width: 125px;
  height: 30px;
  padding-right: 6px;
  background: #4b4b4b;
  border: 1px solid #868686;
  border-left: 0;
  border-radius: 5px;
}
.namebox input { flex: 1; min-width: 0; border: 0; background: none; padding: 0 0 0 5px; font-size: 15px; }
.dots { display: flex; flex-direction: column; gap: 3px; margin: 9px 11px; }
.dots i { width: 3px; height: 3px; background: #ccc; }
.dots.white { margin: 0 20px 0 auto; }
.dots.white i { background: #fff; }
.fx {
  display: flex;
  align-items: center;
  justify-content: space-between;
  width: 92px;
  height: 30px;
  padding: 0 7px;
  margin-right: 5px;
  background: #4b4b4b;
  border: 1px solid #868686;
  border-radius: 5px;
}
.fxb { font: italic 22px/24px "Liberation Serif", serif; color: #ddd; }
.formula {
  flex: 1;
  display: flex;
  align-items: flex-start;
  height: 78px;
  padding: 9px 5px;
  background: #4b4b4b;
  border: 1px solid #868686;
  border-radius: 5px;
}
.formula textarea { flex: 1; height: 58px; padding: 0; border: 0; background: none; resize: none; outline: 0; }

/* Sheet */
.sheet { flex: 1; min-height: 0; display: flex; }
.grid {
  position: relative;
  flex: 1;
  min-width: 0;
  overflow: hidden;
  font: 16px/21px Lato, "Open Sans", sans-serif;
  font-variant-ligatures: none;
}
.grid table {
  width: calc(100% + 14px);
  margin-left: -14px;
  table-layout: fixed;
  border-collapse: separate;
  border-spacing: 0;
}
.rh { width: 36px; }
.ca { width: 215px; }
.cb { width: 130px; }
.cc { width: 96px; }
.cd { width: 77px; }
.ce { width: 180px; }
.cf { width: 184px; }
.cg { width: 115px; }
.ch { width: 304px; }
.ci { width: 176px; }
.cj { width: 357px; }
.grid th, .grid td {
  height: 23px;
  padding: 1px 0 0;
  text-align: center;
  white-space: nowrap;
}
.grid th {
  font-weight: 400;
  background: #2d2d2d;
  border-right: 1px solid #a8a8a8;
  border-bottom: 1px solid #a8a8a8;
}
.grid .letters th { height: 24px; padding: 0; }
.letters .k { border-right: 0; }
.corner svg { margin-left: 16px; }
.grid .letters .sel { background: #646464; border-bottom: 2px solid #217346; }
.grid tbody .sel { background: #646464; }
.grid td { background: #fff; color: #000; border-right: 1px solid #dcdcdc; border-bottom: 1px solid #dcdcdc; }
.grid td:last-child { border-right: 0; }
.grid .x { background: #000; border-color: #000; }
.grid .last td { border-bottom-color: #000; }
.grid .heads th { vertical-align: bottom; }
.grid .heads td { padding: 0; background: #ccffcc; border-color: #000; }
.grid .heads .k { background: #fff; border-color: #dcdcdc; }
.heads div {
  display: grid;
  align-content: safe center;
  justify-content: center;
  height: 64px;
  overflow: hidden;
  font-weight: 700;
  line-height: 22px;
}
.current { position: relative; }
.current::before {
  content: "";
  position: absolute;
  inset: -3px -2px -2px -2px;
  border: 2px solid #217346;
}
.current::after {
  content: "";
  position: absolute;
  right: -3px;
  bottom: -3px;
  width: 5px;
  height: 5px;
  background: #217346;
  outline: 1px solid #fff;
}
.cover {
  position: absolute;
  display: flex;
  align-items: center;
  justify-content: center;
  background: #000;
  border: 2px solid #375623;
  color: #ff0;
  font-size: 25px;
  line-height: 30px;
}
.cover span { writing-mode: vertical-rl; transform: rotate(180deg); white-space: nowrap; }
.cover-a { left: 22px; top: 91px; width: 342px; height: 541px; border-left: 0; }
.cover-b { left: 463px; top: 89px; width: 444px; height: 566px; }
.vscroll {
  width: 20px;
  margin: 0 3px;
  padding: 6px 0 3px;
  display: flex;
  flex-direction: column;
  align-items: center;
  background: #393939;
  border-radius: 10px;
}
.vscroll i { flex: 1; width: 11px; margin: 6px 0 53px; border-radius: 6px; background: #c4c4c4; }

/* Sheet tabs and status */
.sheetbar {
  height: 40px;
  display: flex;
  align-items: center;
  padding: 0 23px 3px 4px;
  border-top: 1px solid #555;
}
.nav { width: 40px; height: 30px; }
.sheet-tab {
  align-self: flex-start;
  width: 72px;
  height: 35px;
  margin-left: 45px;
  padding: 0;
  background: #fff;
  border: 0;
  border-radius: 0 0 6px 6px;
  color: #222;
  font-size: 16px;
  font-weight: 600;
}
.sheet-tab span { display: inline-block; height: 26px; border-bottom: 2px solid #107c41; }
.tabsep { width: 1px; height: 24px; margin-left: 5px; background: #808080; }
.add { margin-left: 52px; }
.hscroll {
  width: calc(38% + 6px);
  height: 21px;
  padding: 0 6px;
  display: flex;
  align-items: center;
  background: #393939;
  border-radius: 10px;
}
.hscroll i { flex: 1; height: 11px; margin: 0 36px 0 6px; border-radius: 6px; background: #c4c4c4; }
.status {
  height: 24px;
  display: flex;
  align-items: center;
  padding: 4px 9px 0 0;
  background: #363636;
  font-size: 13px;
}
.mode { width: 61px; margin-left: -3px; }
.acc { gap: 1px; }
.views { display: flex; gap: 32px; margin-left: auto; margin-right: 23px; }
.zoom {
  appearance: none;
  width: 125px;
  height: 10px;
  margin: 0 6px;
  background: linear-gradient(#ccc, #ccc) center / 100% 1px no-repeat;
}
.zoom::-webkit-slider-thumb { appearance: none; width: 1px; height: 10px; background: #ccc; }
.zoom-level { margin-left: 16px; color: #858585; }
```
